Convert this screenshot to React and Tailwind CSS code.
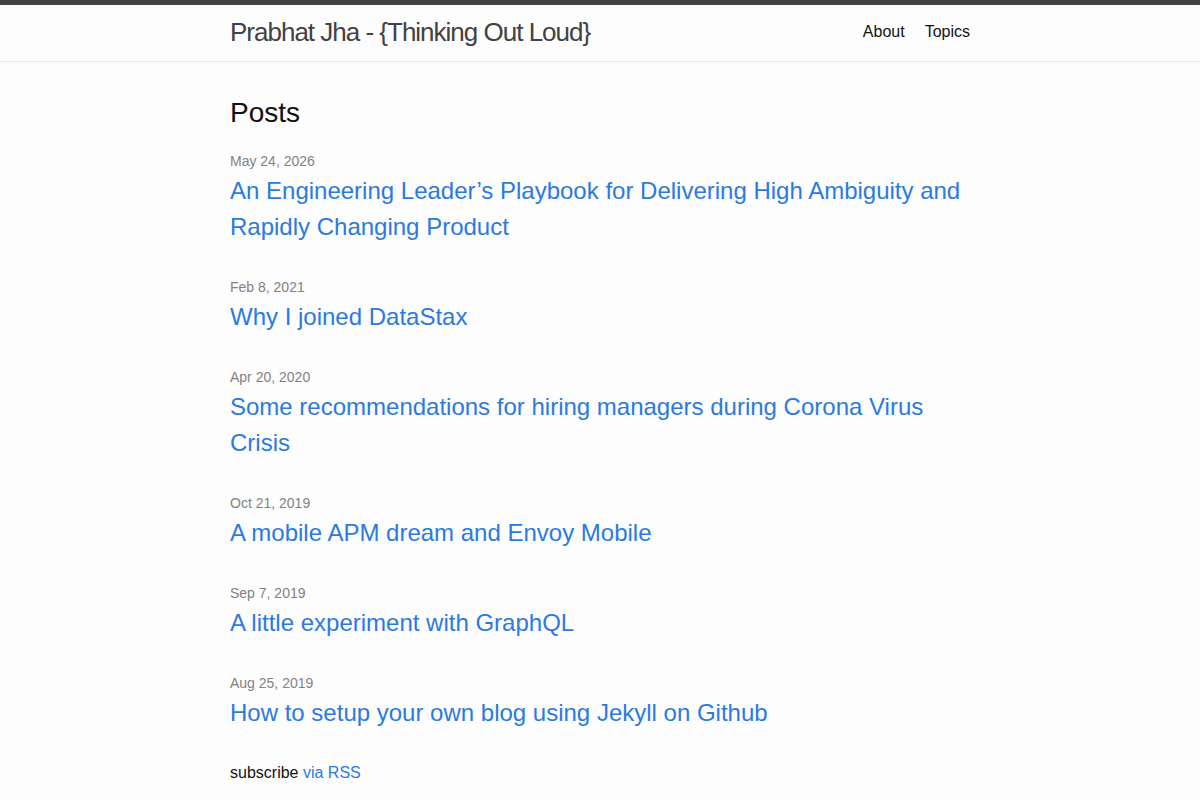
import React from "react";

const posts = [
  {
    date: "May 24, 2026",
    title:
      "An Engineering Leader’s Playbook for Delivering High Ambiguity and Rapidly Changing Product",
  },
  { date: "Feb 8, 2021", title: "Why I joined DataStax" },
  {
    date: "Apr 20, 2020",
    title: "Some recommendations for hiring managers during Corona Virus Crisis",
  },
  { date: "Oct 21, 2019", title: "A mobile APM dream and Envoy Mobile" },
  { date: "Sep 7, 2019", title: "A little experiment with GraphQL" },
  { date: "Aug 25, 2019", title: "How to setup your own blog using Jekyll on Github" },
];

const App = () => {
  return (
    <div className="min-h-screen bg-[#fdfdfd] text-[#111] font-['Liberation_Sans',Arial,sans-serif] text-base leading-6">
      {/* Site header */}
      <header className="h-[62px] border-t-[5px] border-t-[#424242] border-b border-b-[#e8e8e8]">
        <div className="mx-auto max-w-[800px] px-[30px] flex justify-between">
          <a className="text-[26px] leading-[54px] font-light tracking-[-1px] text-[#424242]">
            Prabhat Jha - {"{"}Thinking Out Loud{"}"}
          </a>
          <nav className="flex gap-5 leading-[54px] text-[#111]">
            <a>About</a>
            <a>Topics</a>
          </nav>
        </div>
      </header>

      {/* Page content */}
      <main className="py-[30px]">
        <div className="mx-auto max-w-[800px] px-[30px]">
          <h2 className="text-[28px] leading-[42px] mb-[15px]">Posts</h2>
          <ul className="flex flex-col gap-[30px] mb-[30px]">
            {posts.map((post) => (
              <li key={post.title}>
                <div className="h-6 text-sm leading-6 text-[#828282]">{post.date}</div>
                <h3 className="text-2xl leading-9">
                  <a className="text-[#2a7ae2]">{post.title}</a>
                </h3>
              </li>
            ))}
          </ul>
          <p>
            subscribe <a className="text-[#2a7ae2]">via RSS</a>
          </p>
        </div>
      </main>
    </div>
  );
};

export default App;
